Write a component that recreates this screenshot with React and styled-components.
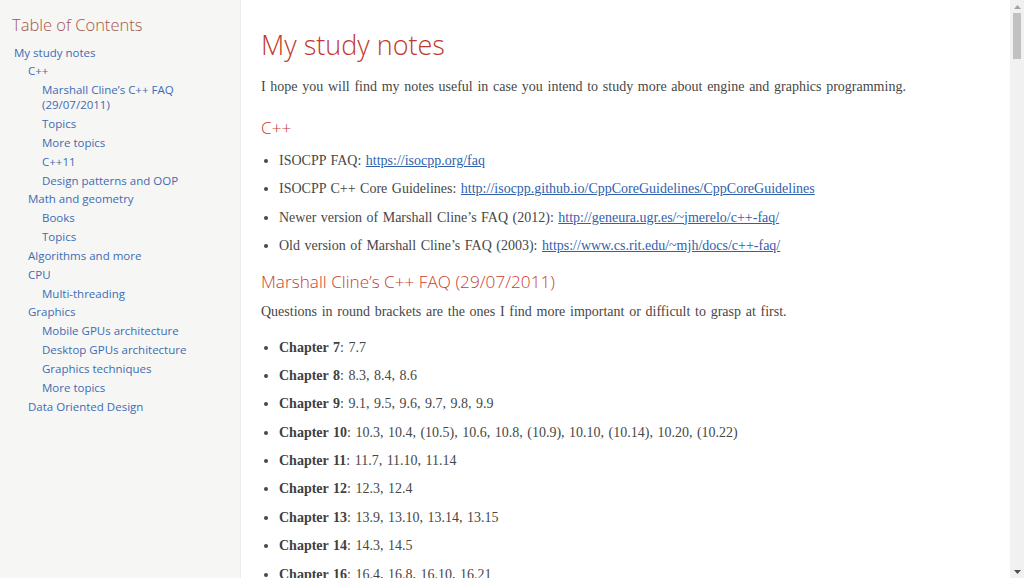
import React from "react";
import styled, { createGlobalStyle } from "styled-components";

const Global = createGlobalStyle`
  html, body { margin: 0; padding: 0; background: #fff; }
  body { overflow: hidden; }
  * { box-sizing: border-box; }
`;

const Page = styled.div`
  display: flex;
  height: 578px;
  width: 1024px;
  overflow: hidden;
`;

const Sidebar = styled.nav`
  flex: 0 0 241px;
  background: #f6f6f5;
  border-right: 1px solid #ececec;
  padding: 13px 8px 0 12px;
  font-family: "Open Sans", sans-serif;
`;

const TocTitle = styled.div`
  font-size: 16.5px;
  line-height: 24px;
  color: #a4584a;
  font-weight: 300;
  margin-bottom: 7.5px;
`;

const TocList = styled.ul`
  list-style: none;
  margin: 0;
  padding: 0 0 0 ${(p) => (p.$nested ? 14 : 2)}px;
`;

const TocItem = styled.li`
  margin-top: 3.85px;
  &:first-child { margin-top: ${(p) => (p.$root ? 0 : 3.85)}px; }
`;

const TocLink = styled.a`
  display: block;
  font-size: 11.5px;
  line-height: 15px;
  color: #3d6cb3;
  text-decoration: none;
`;

const Main = styled.main`
  flex: 1;
  overflow: hidden;
  padding: 27px 20px 0 20px;
  font-family: "Liberation Serif", serif;
  color: #474747;
`;

const H1 = styled.h1`
  margin: 0;
  font-family: "Open Sans", sans-serif;
  font-weight: 300;
  font-size: 27px;
  line-height: 36px;
  color: #c0392b;
`;

const H2 = styled.h2`
  margin: ${(p) => p.$mt}px 0 0 0;
  font-family: "Open Sans", sans-serif;
  font-weight: 300;
  font-size: 17.2px;
  line-height: 26px;
  color: #c8402e;
`;

const P = styled.p`
  margin: ${(p) => p.$mt}px 0 0 0;
  font-size: 14px;
  line-height: 21px;
  word-spacing: 1.2px;
`;

const List = styled.ul`
  margin: ${(p) => p.$mt}px 0 0 0;
  padding-left: 18px;
  font-size: 14px;
  line-height: 21px;
  word-spacing: 1px;
`;

const Item = styled.li`
  margin-top: ${(p) => p.$step - 21}px;
  &:first-child { margin-top: 0; }
`;

const Link = styled.a`
  color: #2f5fad;
  text-decoration: underline;
`;

const Bold = styled.strong`
  font-weight: 700;
  color: #3f3f3f;
`;

const Scrollbar = styled.div`
  flex: 0 0 14px;
  background: #f1f1f1;
  display: flex;
  flex-direction: column;
  align-items: center;
`;

const Arrow = styled.div`
  height: 13px;
  width: 14px;
  display: flex;
  align-items: center;
  justify-content: center;
`;

const Thumb = styled.div`
  width: 8px;
  height: 46px;
  background: #c1c1c1;
`;

const Spacer = styled.div`
  flex: 1;
`;

const toc = [
  {
    t: "My study notes",
    c: [
      {
        t: "C++",
        c: [
          { t: "Marshall Cline’s C++ FAQ (29/07/2011)" },
          { t: "Topics" },
          { t: "More topics" },
          { t: "C++11" },
          { t: "Design patterns and OOP" },
        ],
      },
      { t: "Math and geometry", c: [{ t: "Books" }, { t: "Topics" }] },
      { t: "Algorithms and more" },
      { t: "CPU", c: [{ t: "Multi-threading" }] },
      {
        t: "Graphics",
        c: [
          { t: "Mobile GPUs architecture" },
          { t: "Desktop GPUs architecture" },
          { t: "Graphics techniques" },
          { t: "More topics" },
        ],
      },
      { t: "Data Oriented Design" },
    ],
  },
];

function Toc({ items, nested }) {
  return (
    <TocList $nested={nested}>
      {items.map((it, i) => (
        <TocItem key={i} $root={!nested}>
          <TocLink href="#">{it.t}</TocLink>
          {it.c && <Toc items={it.c} nested />}
        </TocItem>
      ))}
    </TocList>
  );
}

const links = [
  ["ISOCPP FAQ: ", "https://isocpp.org/faq"],
  ["ISOCPP C++ Core Guidelines: ", "http://isocpp.github.io/CppCoreGuidelines/CppCoreGuidelines"],
  ["Newer version of Marshall Cline’s FAQ (2012): ", "http://geneura.ugr.es/~jmerelo/c++-faq/"],
  ["Old version of Marshall Cline’s FAQ (2003): ", "https://www.cs.rit.edu/~mjh/docs/c++-faq/"],
];

const chapters = [
  ["7", "7.7"],
  ["8", "8.3, 8.4, 8.6"],
  ["9", "9.1, 9.5, 9.6, 9.7, 9.8, 9.9"],
  ["10", "10.3, 10.4, (10.5), 10.6, 10.8, (10.9), 10.10, (10.14), 10.20, (10.22)"],
  ["11", "11.7, 11.10, 11.14"],
  ["12", "12.3, 12.4"],
  ["13", "13.9, 13.10, 13.14, 13.15"],
  ["14", "14.3, 14.5"],
  ["16", "16.4, 16.8, 16.10, 16.21"],
  ["17", "17.2, 17.3"],
];

export default function App() {
  return (
    <>
      <Global />
      <Page>
        <Sidebar>
          <TocTitle>Table of Contents</TocTitle>
          <Toc items={toc} />
        </Sidebar>
        <Main>
          <H1>My study notes</H1>
          <P $mt={12.5}>
            I hope you will find my notes useful in case you intend to study more about engine and graphics programming.
          </P>
          <H2 $mt={18.5}>C++</H2>
          <List $mt={8.5}>
            {links.map(([a, b], i) => (
              <Item key={i} $step={28.5}>
                {a}
                <Link href="#">{b}</Link>
              </Item>
            ))}
          </List>
          <H2 $mt={13}>Marshall Cline’s C++ FAQ (29/07/2011)</H2>
          <P $mt={5.5}>Questions in round brackets are the ones I find more important or difficult to grasp at first.</P>
          <List $mt={15}>
            {chapters.map(([n, v], i) => (
              <Item key={i} $step={28.4}>
                <Bold>Chapter {n}</Bold>: {v}
              </Item>
            ))}
          </List>
        </Main>
        <Scrollbar>
          <Arrow>
            <svg width="7" height="4" viewBox="0 0 7 4">
              <path d="M0 4 L3.5 0 L7 4 Z" fill="#a3a3a3" />
            </svg>
          </Arrow>
          <Thumb />
          <Spacer />
          <Arrow>
            <svg width="7" height="4" viewBox="0 0 7 4">
              <path d="M0 0 L7 0 L3.5 4 Z" fill="#505050" />
            </svg>
          </Arrow>
        </Scrollbar>
      </Page>
    </>
  );
}
